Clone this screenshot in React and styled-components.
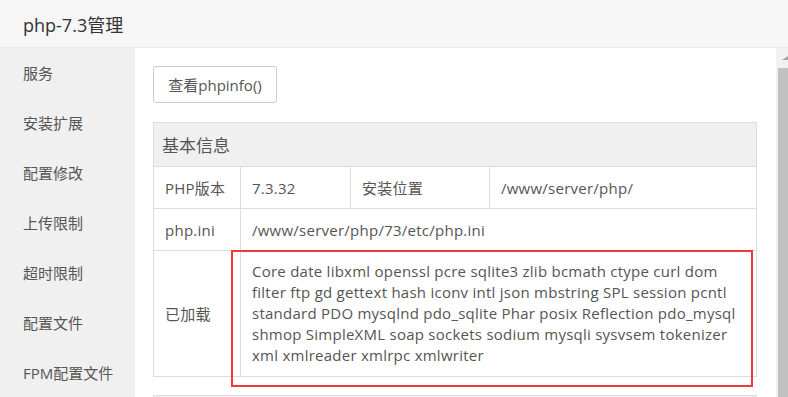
import React from "react";
import styled, { createGlobalStyle } from "styled-components";

const GlobalStyle = createGlobalStyle`
    html, body {
        margin: 0;
        padding: 0;
        background: #fff;
    }
    body {
        font-family: "Open Sans", "Noto Sans CJK SC", sans-serif;
        color: #555;
    }
`;

const Page = styled.div`
    width: 788px;
    height: 397px;
    overflow: hidden;
    display: flex;
    flex-direction: column;
`;

const Header = styled.div`
    height: 47px;
    flex-shrink: 0;
    background: #f6f6f6;
    border-bottom: 1px solid #e9e9e9;
    padding-left: 23px;
    display: flex;
    align-items: center;
    font-size: 18px;
    color: #333;
`;

const Body = styled.div`
    flex: 1;
    display: flex;
    min-height: 0;
`;

const Sidebar = styled.ul`
    width: 135px;
    flex-shrink: 0;
    margin: 0;
    padding: 0;
    list-style: none;
    background: #f0f0f0;
    li {
        height: 50px;
        line-height: 50px;
        padding-left: 23px;
        font-size: 15px;
        color: #555;
        white-space: nowrap;
    }
`;

const Content = styled.div`
    flex: 1;
    padding: 18px 0 0 18px;
    background: #fff;
`;

const Button = styled.button`
    height: 37px;
    width: 124px;
    padding: 0;
    border: 1px solid #ccc;
    border-radius: 3px;
    background: #fff;
    font-family: inherit;
    font-size: 15px;
    color: #555;
    margin-bottom: 19px;
`;

const Table = styled.table`
    width: 604px;
    table-layout: fixed;
    border-collapse: collapse;
    margin-bottom: 18px;
    font-size: 15px;
    color: #555;
    th, td {
        border: 1px solid #ddd;
        text-align: left;
        vertical-align: middle;
    }
    th {
        height: 43px;
        padding: 0 8px;
        background: #f0f0f0;
        font-weight: normal;
        font-size: 17px;
        color: #555;
    }
    td {
        height: 41px;
        padding: 0 11px;
        letter-spacing: 0.25px;
    }
`;

const ListCell = styled.td`
    position: relative;
    && {
        padding: 10px 18px 10px 11px;
        line-height: 21px;
    }
`;

/* 截图上的红色标注框 */
const Highlight = styled.span`
    position: absolute;
    left: -10px;
    top: -1px;
    right: 3px;
    bottom: -11px;
    border: 2px solid #f03a3a;
    pointer-events: none;
`;

const Scrollbar = styled.div`
    width: 12px;
    flex-shrink: 0;
    background: #f1f1f1;
    display: flex;
    flex-direction: column;
    align-items: flex-end;
    .arrow {
        height: 20px;
        display: flex;
        align-items: center;
        justify-content: flex-end;
        width: 100%;
        padding-left: 6px;
        box-sizing: border-box;
    }
    .thumb {
        width: 10px;
        flex: 1;
        background: #c1c1c1;
    }
`;

const menus = ['服务', '安装扩展', '配置修改', '上传限制', '超时限制', '配置文件', 'FPM配置文件'];

const modules = 'Core date libxml openssl pcre sqlite3 zlib bcmath ctype curl dom filter ftp gd gettext hash iconv intl json mbstring SPL session pcntl standard PDO mysqlnd pdo_sqlite Phar posix Reflection pdo_mysql shmop SimpleXML soap sockets sodium mysqli sysvsem tokenizer xml xmlreader xmlrpc xmlwriter';

const App = function App() {
    return <>
        <GlobalStyle />
        <Page>
            <Header>php-7.3管理</Header>
            <Body>
                <Sidebar>
                    {menus.map(item => <li key={item}>{item}</li>)}
                </Sidebar>
                <Content>
                    <Button>查看phpinfo()</Button>
                    <Table>
                        <colgroup>
                            <col style={{ width: 87 }} />
                            <col style={{ width: 110 }} />
                            <col style={{ width: 139 }} />
                            <col />
                        </colgroup>
                        <thead>
                            <tr><th colSpan={4}>基本信息</th></tr>
                        </thead>
                        <tbody>
                            <tr>
                                <td>PHP版本</td>
                                <td>7.3.32</td>
                                <td>安装位置</td>
                                <td>/www/server/php/</td>
                            </tr>
                            <tr>
                                <td>php.ini</td>
                                <td colSpan={3}>/www/server/php/73/etc/php.ini</td>
                            </tr>
                            <tr>
                                <td>已加载</td>
                                <ListCell colSpan={3}>
                                    {modules}
                                    <Highlight />
                                </ListCell>
                            </tr>
                        </tbody>
                    </Table>
                    <Table>
                        <thead>
                            <tr><th>&nbsp;</th></tr>
                        </thead>
                    </Table>
                </Content>
                <Scrollbar>
                    <div className="arrow">
                        <svg width="6" height="4" viewBox="0 0 6 4">
                            <path d="M0 4 L6 4 L6 0 Z" fill="#a3a3a3" />
                        </svg>
                    </div>
                    <div className="thumb" />
                </Scrollbar>
            </Body>
        </Page>
    </>;
};

export default App;
